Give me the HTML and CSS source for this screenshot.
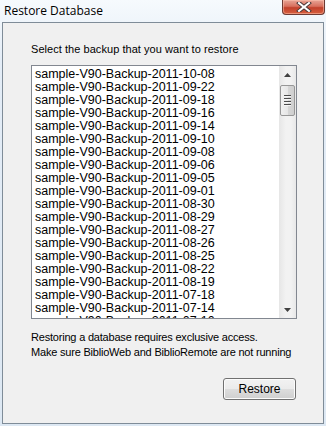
FILE: index.html
```html
<!DOCTYPE html>
<html>
<head>
<meta charset="utf-8">
<link rel="stylesheet" href="styles.css">
</head>
<body>
<div class="window">
  <div class="titlebar">
    <span class="title">Restore Database</span>
    <span class="close"><svg width="16" height="10" viewBox="0 0 16 10"><path d="M3 1 L13 9 M13 1 L3 9" stroke="#4a3a3a" stroke-width="4" stroke-linecap="square"/><path d="M3 1 L13 9 M13 1 L3 9" stroke="#ffffff" stroke-width="2" stroke-linecap="square"/></svg></span>
  </div>
  <div class="client">
    <div class="label">Select the backup that you want to restore</div>
    <div class="listbox">
      <ul class="items">
        <li>sample-V90-Backup-2011-10-08</li>
        <li>sample-V90-Backup-2011-09-22</li>
        <li>sample-V90-Backup-2011-09-18</li>
        <li>sample-V90-Backup-2011-09-16</li>
        <li>sample-V90-Backup-2011-09-14</li>
        <li>sample-V90-Backup-2011-09-10</li>
        <li>sample-V90-Backup-2011-09-08</li>
        <li>sample-V90-Backup-2011-09-06</li>
        <li>sample-V90-Backup-2011-09-05</li>
        <li>sample-V90-Backup-2011-09-01</li>
        <li>sample-V90-Backup-2011-08-30</li>
        <li>sample-V90-Backup-2011-08-29</li>
        <li>sample-V90-Backup-2011-08-27</li>
        <li>sample-V90-Backup-2011-08-26</li>
        <li>sample-V90-Backup-2011-08-25</li>
        <li>sample-V90-Backup-2011-08-22</li>
        <li>sample-V90-Backup-2011-08-19</li>
        <li>sample-V90-Backup-2011-07-18</li>
        <li>sample-V90-Backup-2011-07-14</li>
        <li>sample-V90-Backup-2011-07-10</li>
      </ul>
      <div class="scrollbar">
        <div class="arrow"><svg width="7" height="4" viewBox="0 0 7 4"><path d="M0 4 L3.5 0 L7 4 Z" fill="#404040"/></svg></div>
        <div class="track">
          <div class="thumb"><span></span><span></span><span></span><span></span></div>
        </div>
        <div class="arrow"><svg width="7" height="4" viewBox="0 0 7 4"><path d="M0 0 L3.5 4 L7 0 Z" fill="#404040"/></svg></div>
      </div>
    </div>
    <div class="note">
      <div>Restoring a database requires exclusive access.</div>
      <div>Make sure BiblioWeb and BiblioRemote are not running</div>
    </div>
    <div class="actions">
      <button class="btn">Restore</button>
    </div>
  </div>
</div>
</body>
</html>
```
FILE: styles.css
```css
html, body {
  margin: 0;
  padding: 0;
}
body {
  width: 326px;
  height: 426px;
  overflow: hidden;
  font-family: "Liberation Sans", Arial, sans-serif;
  font-size: 11px;
  color: #000;
}
.window {
  width: 326px;
  height: 426px;
  box-sizing: border-box;
  background: linear-gradient(to bottom, #f6fafd 0px, #e4edf7 60px, #dde8f3 426px);
  display: flex;
  flex-direction: column;
}
.titlebar {
  height: 22px;
  display: flex;
  justify-content: space-between;
  align-items: flex-start;
  flex: none;
}
.title {
  margin: 3px 0 0 4px;
  font-family: "Open Sans", sans-serif;
  font-size: 12px;
  line-height: 16px;
  color: #000;
  text-shadow: 0 0 6px #ffffff;
}
.close {
  width: 43px;
  height: 15px;
  margin-right: 1px;
  box-sizing: border-box;
  border: 1px solid #6d3a33;
  border-top: none;
  border-radius: 0 0 4px 4px;
  background: linear-gradient(to bottom, #e8a596 0%, #d8705e 45%, #c2402b 55%, #d6603f 100%);
  display: flex;
  align-items: center;
  justify-content: center;
  box-shadow: inset 0 0 0 1px rgba(255,200,180,0.5);
}
.close svg { display: block; }
.client {
  margin: 0 2px 2px 2px;
  height: 402px;
  box-sizing: border-box;
  border: 1px solid #7f8c98;
  background: #f0f0f0;
  padding: 0 0 0 28px;
  display: flex;
  flex-direction: column;
}
.label {
  margin-top: 19px;
  line-height: 15px;
  height: 15px;
  font-size: 11px;
  letter-spacing: 0.05px;
}
.listbox {
  margin-top: 8px;
  width: 266px;
  height: 254px;
  box-sizing: border-box;
  border: 1px solid #828790;
  background: #fff;
  display: flex;
  overflow: hidden;
}
.items {
  list-style: none;
  margin: 0;
  padding: 2px 0 0 3px;
  flex: 1;
  overflow: hidden;
  font-size: 12.5px;
}
.items li {
  height: 13px;
  line-height: 13px;
  white-space: nowrap;
}
.scrollbar {
  width: 17px;
  flex: none;
  display: flex;
  flex-direction: column;
  background: linear-gradient(to right, #e6e6e6, #f2f2f2 40%, #f2f2f2 70%, #e8e8e8);
}
.arrow {
  height: 17px;
  display: flex;
  align-items: center;
  justify-content: center;
  flex: none;
}
.arrow svg { display: block; }
.track {
  flex: 1;
  padding: 2px 0 0 0;
}
.thumb {
  margin: 0 1px 0 1px;
  height: 31px;
  box-sizing: border-box;
  border: 1px solid #979797;
  border-radius: 2px;
  background: linear-gradient(to right, #f0f0f0, #e6e6e6 50%, #d6d6d6 51%, #cfcfcf);
  display: flex;
  flex-direction: column;
  align-items: center;
  justify-content: center;
  gap: 1px;
}
.thumb span {
  display: block;
  width: 7px;
  height: 1px;
  background: #4a4a4a;
  border-bottom: 1px solid #f4f4f4;
}
.note {
  margin-top: 11px;
  line-height: 15px;
  font-size: 11px;
  letter-spacing: -0.2px;
  white-space: nowrap;
}
.actions {
  display: flex;
  justify-content: flex-end;
  padding-right: 27px;
  margin-top: 18px;
}
.btn {
  width: 73px;
  height: 22px;
  box-sizing: border-box;
  border: 1px solid #707070;
  border-radius: 3px;
  background: linear-gradient(to bottom, #f2f2f2 0%, #ebebeb 50%, #dddddd 51%, #cfcfcf 100%);
  box-shadow: inset 0 0 0 1px #fcfcfc;
  font-family: "Liberation Sans", Arial, sans-serif;
  font-size: 12px;
  color: #000;
  padding: 0;
}
```
